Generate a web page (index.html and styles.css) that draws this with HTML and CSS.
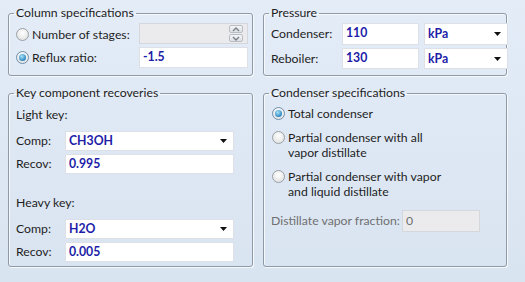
FILE: index.html
```html
<!DOCTYPE html>
<html lang="en">
<head>
    <meta charset="UTF-8">
    <title>Column specifications</title>
    <link rel="stylesheet" href="styles.css">
</head>
<body>
    <div class="layout">
        <!-- Column specifications -->
        <fieldset class="panel panel-top">
            <legend>Column specifications</legend>
            <div class="spec-grid">
                <label class="radio-row"><span class="radio"></span>Number of stages:</label>
                <div class="field disabled spin">
                    <span class="spin-buttons">
                        <span class="spin-btn"><svg width="8" height="5" viewBox="0 0 8 5"><path d="M1 4 L4 1 L7 4" fill="none" stroke="#7a7f86" stroke-width="1.4"/></svg></span>
                        <span class="spin-btn"><svg width="8" height="5" viewBox="0 0 8 5"><path d="M1 1 L4 4 L7 1" fill="none" stroke="#7a7f86" stroke-width="1.4"/></svg></span>
                    </span>
                </div>
                <label class="radio-row"><span class="radio checked"></span>Reflux ratio:</label>
                <div class="field value">-1.5</div>
            </div>
        </fieldset>

        <!-- Pressure -->
        <fieldset class="panel panel-top">
            <legend>Pressure</legend>
            <div class="pressure-grid">
                <span class="label">Condenser:</span>
                <div class="field value">110</div>
                <div class="field value combo">kPa<svg class="caret" width="7" height="4" viewBox="0 0 7 4"><path d="M0 0 H7 L3.5 4 Z" fill="#111"/></svg></div>
                <span class="label">Reboiler:</span>
                <div class="field value">130</div>
                <div class="field value combo">kPa<svg class="caret" width="7" height="4" viewBox="0 0 7 4"><path d="M0 0 H7 L3.5 4 Z" fill="#111"/></svg></div>
            </div>
        </fieldset>

        <!-- Key component recoveries -->
        <fieldset class="panel panel-bottom">
            <legend>Key component recoveries</legend>
            <div class="key-block">
                <div class="key-title">Light key:</div>
                <div class="key-grid">
                    <span class="label">Comp:</span>
                    <div class="field value combo">CH3OH<svg class="caret" width="7" height="4" viewBox="0 0 7 4"><path d="M0 0 H7 L3.5 4 Z" fill="#111"/></svg></div>
                    <span class="label">Recov:</span>
                    <div class="field value">0.995</div>
                </div>
            </div>
            <div class="key-block heavy">
                <div class="key-title">Heavy key:</div>
                <div class="key-grid">
                    <span class="label">Comp:</span>
                    <div class="field value combo">H2O<svg class="caret" width="7" height="4" viewBox="0 0 7 4"><path d="M0 0 H7 L3.5 4 Z" fill="#111"/></svg></div>
                    <span class="label">Recov:</span>
                    <div class="field value">0.005</div>
                </div>
            </div>
        </fieldset>

        <!-- Condenser specifications -->
        <fieldset class="panel panel-bottom">
            <legend>Condenser specifications</legend>
            <div class="options">
                <label class="option"><span class="radio checked"></span><span>Total condenser</span></label>
                <label class="option"><span class="radio"></span><span>Partial condenser with all<br>vapor distillate</span></label>
                <label class="option"><span class="radio"></span><span>Partial condenser with vapor<br>and liquid distillate</span></label>
            </div>
            <div class="fraction-row">
                <span class="label muted">Distillate vapor fraction:</span>
                <div class="field disabled fraction">0</div>
            </div>
        </fieldset>
    </div>
</body>
</html>
```

FILE: styles.css
```css
body {
    margin: 0;
    padding: 5px 0 0 8px;
    font-family: 'Lato', 'Open Sans', sans-serif;
    font-size: 12.25px;
    color: #1e1e1e;
    background: linear-gradient(#e3ecf7, #d9e4f1);
    height: 277px;
}

.layout {
    display: grid;
    grid-template-columns: 245px 244px;
    grid-template-rows: 71px 182px;
    column-gap: 10px;
    row-gap: 9px;
}

.panel {
    margin: 0;
    padding: 0 4px 0 7px;
    border: 1px solid #8f9aa6;
    border-radius: 3px;
    box-shadow: inset 1px 1px 0 #f6f9fc, 1px 1px 0 #f6f9fc;
    min-width: 0;
}

.panel legend {
    padding: 0 2px;
    margin-left: -2px;
    line-height: 16px;
}

.label {
    line-height: 16px;
    white-space: nowrap;
}

.muted {
    color: #707070;
}

/* text boxes */
.field {
    box-sizing: border-box;
    background-color: #fff;
    border: 1px solid #dde1e7;
    padding: 0 3px;
    line-height: 18px;
    height: 21px;
}

.field.value {
    color: #1d1da8;
    font-weight: bold;
}

.field.disabled {
    background-color: #ebebee;
    border-color: #d4d7dc;
}

.combo {
    display: flex;
    justify-content: space-between;
    align-items: center;
}

.combo .caret {
    margin-right: 3px;
}

/* radio buttons */
.radio {
    box-sizing: border-box;
    display: inline-block;
    width: 13px;
    height: 13px;
    border: 1px solid #9aa0a6;
    border-radius: 50%;
    background: radial-gradient(circle at 50% 35%, #ffffff, #dcdcdc);
    margin-right: 3px;
    flex: none;
    position: relative;
}

.radio.checked {
    border-color: #6d8fae;
}

.radio.checked::after {
    content: '';
    position: absolute;
    left: 2px;
    top: 2px;
    width: 7px;
    height: 7px;
    border-radius: 50%;
    background: radial-gradient(circle at 40% 35%, #a8e4fb, #2d86c2 70%, #1f5f8e);
}

.radio-row {
    display: flex;
    align-items: center;
}

/* column specifications */
.spec-grid {
    display: grid;
    grid-template-columns: 123px 109px;
    grid-template-rows: 22px 21px;
    row-gap: 2px;
    padding-top: 2px;
}

.spin {
    display: flex;
    justify-content: flex-end;
    align-items: center;
}

.spin-buttons {
    display: flex;
    flex-direction: column;
    gap: 1px;
    margin-right: 1px;
}

.spin-btn {
    display: flex;
    align-items: center;
    justify-content: center;
    width: 14px;
    height: 8px;
    border: 1px solid #b9bec5;
    border-radius: 2px;
    background: linear-gradient(#f4f5f7, #dde0e4);
    box-sizing: border-box;
}

/* pressure */
.pressure-grid {
    display: grid;
    grid-template-columns: 66px 77px 84px;
    grid-template-rows: 22px 21px;
    column-gap: 5px;
    row-gap: 3px;
    padding-top: 2px;
    align-items: center;
}

.pressure-grid .field {
    height: 100%;
}

/* key component recoveries */
.key-block {
    padding-top: 6px;
}

.key-block.heavy {
    padding-top: 21px;
}

.key-title {
    line-height: 16px;
    margin-bottom: 8px;
}

.key-grid {
    display: grid;
    grid-template-columns: 49px 169px;
    grid-template-rows: 20px 20px;
    row-gap: 3px;
    align-items: center;
}

.key-grid .field {
    height: 20px;
}

/* condenser specifications */
.options {
    display: flex;
    flex-direction: column;
    gap: 9px;
    padding: 5px 0 0 1px;
}

.option {
    display: flex;
    align-items: flex-start;
    line-height: 15px;
}

.option .radio {
    margin-top: 1px;
}

.fraction-row {
    display: grid;
    grid-template-columns: 131px 78px;
    align-items: center;
    margin-top: 11px;
}

.fraction {
    height: 22px;
    color: #6d6d6d;
    line-height: 20px;
}
```
